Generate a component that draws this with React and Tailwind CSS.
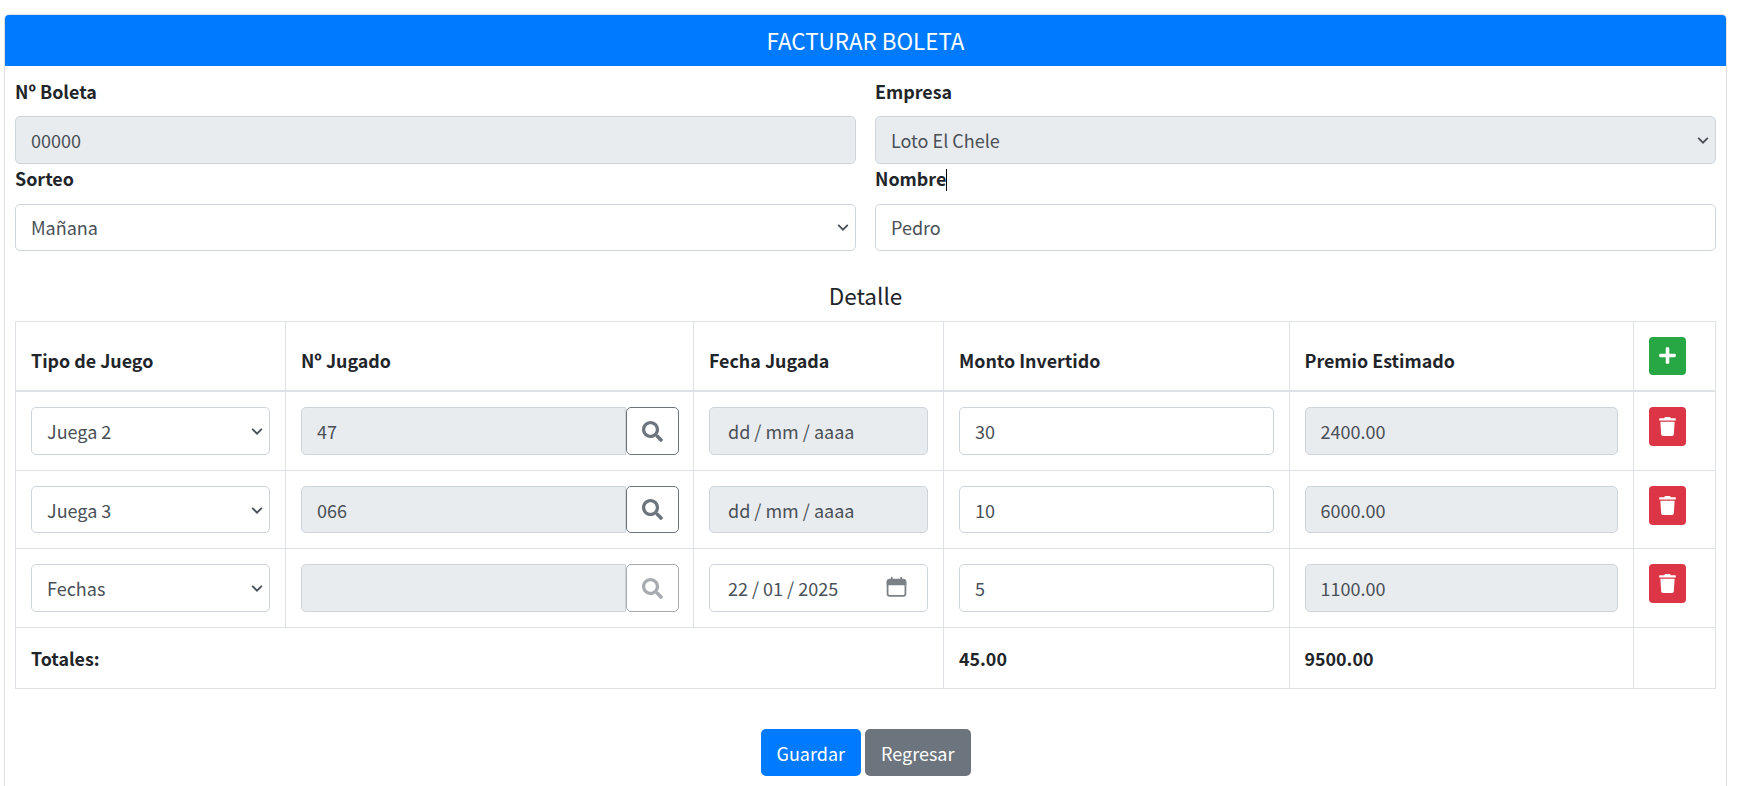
import React from "react";
import { FaSearch, FaPlus, FaTrash } from "react-icons/fa";

const base = "block w-full h-[47.5px] border-[1.25px] rounded-[5px] px-[15px] text-[18px] leading-[30px] text-[#495057] outline-none border-[#ced4da]";

function Chevron() {
  return (
    <svg viewBox="0 0 16 16" className="absolute right-[6px] top-1/2 -translate-y-1/2 w-[14px] h-[14px] pointer-events-none" fill="none" stroke="#495057" strokeWidth="2.1">
      <path d="M2.5 5.5L8 11l5.5-5.5" />
    </svg>
  );
}

function Select({ value, disabled, options }) {
  return (
    <div className="relative">
      <select defaultValue={value} disabled={disabled} className={`${base} appearance-none opacity-100 ${disabled ? "bg-[#e9ecef]" : "bg-white"}`}>
        {(options || [value]).map((o) => <option key={o}>{o}</option>)}
      </select>
      <Chevron />
    </div>
  );
}

function Input({ value, disabled }) {
  return <input readOnly value={value} disabled={disabled} className={`${base} ${disabled ? "bg-[#e9ecef]" : "bg-white"}`} />;
}

function DateField({ value, disabled }) {
  return (
    <div className="relative">
      <input readOnly value={value} disabled={disabled} className={`${base} pl-[18px] text-[17.8px] ${disabled ? "bg-[#e9ecef]" : "bg-white"}`} />
      {!disabled && (
        <svg viewBox="0 0 20 20" className="absolute right-[21px] top-1/2 -translate-y-1/2 -mt-[1px] w-[21px] h-[21px] pointer-events-none" fill="none" stroke="#7c8186" strokeWidth="1.7">
          <rect x="1.5" y="3.5" width="17" height="15" rx="2" />
          <path d="M1.5 4.5a2 2 0 0 1 2-1.5h13a2 2 0 0 1 2 1.5V7.5h-17z" fill="#7c8186" />
          <path d="M5.5 1v3M14.5 1v3" strokeLinecap="round" />
        </svg>
      )}
    </div>
  );
}

function Field({ label, caret, first, children }) {
  return (
    <div className="min-w-0">
      <label className={`block h-[30px] mb-[10px] text-[17.9px] font-bold text-[#212529] ${first ? "leading-[30px]" : "leading-[29px]"}`}>
        {label}
        {caret && <span className="inline-block w-[1px] h-[22px] bg-black align-[-5px]" />}
      </label>
      {children}
    </div>
  );
}

function SearchBtn({ muted }) {
  return (
    <button className={`shrink-0 -mr-[0.5px] w-[52.5px] h-[47.5px] border-[1.25px] rounded-[5px] bg-white flex items-center justify-center ${muted ? "border-[#a7abb0] text-[#a7abb0]" : "border-[#6c757d] text-[#6c757d]"}`}>
      <FaSearch className="w-[21px] h-[21px]" />
    </button>
  );
}

const th = "border-[1.25px] border-[#dee2e6] border-b-[2.5px] p-[15px] text-left align-bottom text-[17.85px] font-bold";
const td = "border-[1.25px] border-[#dee2e6] p-[15px] align-top";
const tf = "border-[1.25px] border-[#dee2e6] p-[15px] align-top text-[17.85px] font-bold";

const rows = [
  { tipo: "Juega 2", num: "47", fecha: "dd / mm / aaaa", disabledFecha: true, monto: "30", premio: "2400.00" },
  { tipo: "Juega 3", num: "066", fecha: "dd / mm / aaaa", disabledFecha: true, monto: "10", premio: "6000.00" },
  { tipo: "Fechas", num: "", fecha: "22 / 01 / 2025", disabledFecha: false, monto: "5", premio: "1100.00", muted: true },
];

export default function App() {
  return (
    <div className="h-[786px] overflow-hidden bg-white text-[18px] leading-[30px] text-[#212529] font-['Noto_Sans_CJK_SC','Noto_Sans',sans-serif] pt-[14px] pl-[4px]">
      <div className="w-[1723px] h-[800px] border-[1.25px] border-[#dfdfdf] rounded-[5px] overflow-hidden">
        <div className="h-[51px] bg-[#007bff] text-white text-center text-[22.4px] leading-[50px]">FACTURAR BOLETA</div>
        <div className="px-[10px] pt-[10px]">
          <div className="grid grid-cols-2 gap-x-[19px]">
            <Field label="Nº Boleta" first><Input value="00000" disabled /></Field>
            <Field label="Empresa" first><Select value="Loto El Chele" disabled /></Field>
            <Field label="Sorteo"><Select value="Mañana" /></Field>
            <Field label="Nombre" caret><Input value="Pedro" /></Field>
          </div>
          <h5 className="mt-[25.5px] mb-[7px] text-center text-[22.5px] leading-[37px] font-normal">Detalle</h5>
          <table className="w-[1700px] table-fixed border-collapse">
            <colgroup>
              <col className="w-[270px]" />
              <col className="w-[408px]" />
              <col className="w-[250px]" />
              <col className="w-[345.5px]" />
              <col className="w-[344px]" />
              <col className="w-[82.5px]" />
            </colgroup>
            <thead>
              <tr>
                <th className={th}>Tipo de Juego</th>
                <th className={th}>Nº Jugado</th>
                <th className={th}>Fecha Jugada</th>
                <th className={th}>Monto Invertido</th>
                <th className={th}>Premio Estimado</th>
                <th className={th}>
                  <button className="w-[37px] h-[38.75px] rounded-[4px] pl-[1px] bg-[#28a745] text-white flex items-center justify-center">
                    <FaPlus className="w-[19px] h-[19px]" />
                  </button>
                </th>
              </tr>
            </thead>
            <tbody>
              {rows.map((r) => (
                <tr key={r.tipo}>
                  <td className={td}><Select value={r.tipo} options={["Juega 2", "Juega 3", "Fechas"]} /></td>
                  <td className={td}>
                    <div className="flex">
                      <div className="flex-1 min-w-0"><input readOnly disabled value={r.num} className={`${base} bg-[#e9ecef] rounded-r-none`} /></div>
                      <SearchBtn muted={r.muted} />
                    </div>
                  </td>
                  <td className={td}><DateField value={r.fecha} disabled={r.disabledFecha} /></td>
                  <td className={td}><Input value={r.monto} /></td>
                  <td className={td}><Input value={r.premio} disabled /></td>
                  <td className={td}>
                    <button className="w-[37px] h-[38.75px] rounded-[4px] bg-[#dc3545] text-white flex items-center justify-center">
                      <FaTrash className="w-[17px] h-[19px]" />
                    </button>
                  </td>
                </tr>
              ))}
            </tbody>
            <tfoot>
              <tr>
                <td className={tf} colSpan={3}>Totales:</td>
                <td className={tf}>45.00</td>
                <td className={tf}>9500.00</td>
                <td className={tf}></td>
              </tr>
            </tfoot>
          </table>
          <div className="mt-[40px] flex justify-center gap-[4px]">
            <button className="h-[47.5px] px-[16px] rounded-[5px] bg-[#007bff] text-white text-[18px]">Guardar</button>
            <button className="h-[47.5px] px-[16px] rounded-[5px] bg-[#6c757d] text-white text-[18px]">Regresar</button>
          </div>
        </div>
      </div>
    </div>
  );
}
